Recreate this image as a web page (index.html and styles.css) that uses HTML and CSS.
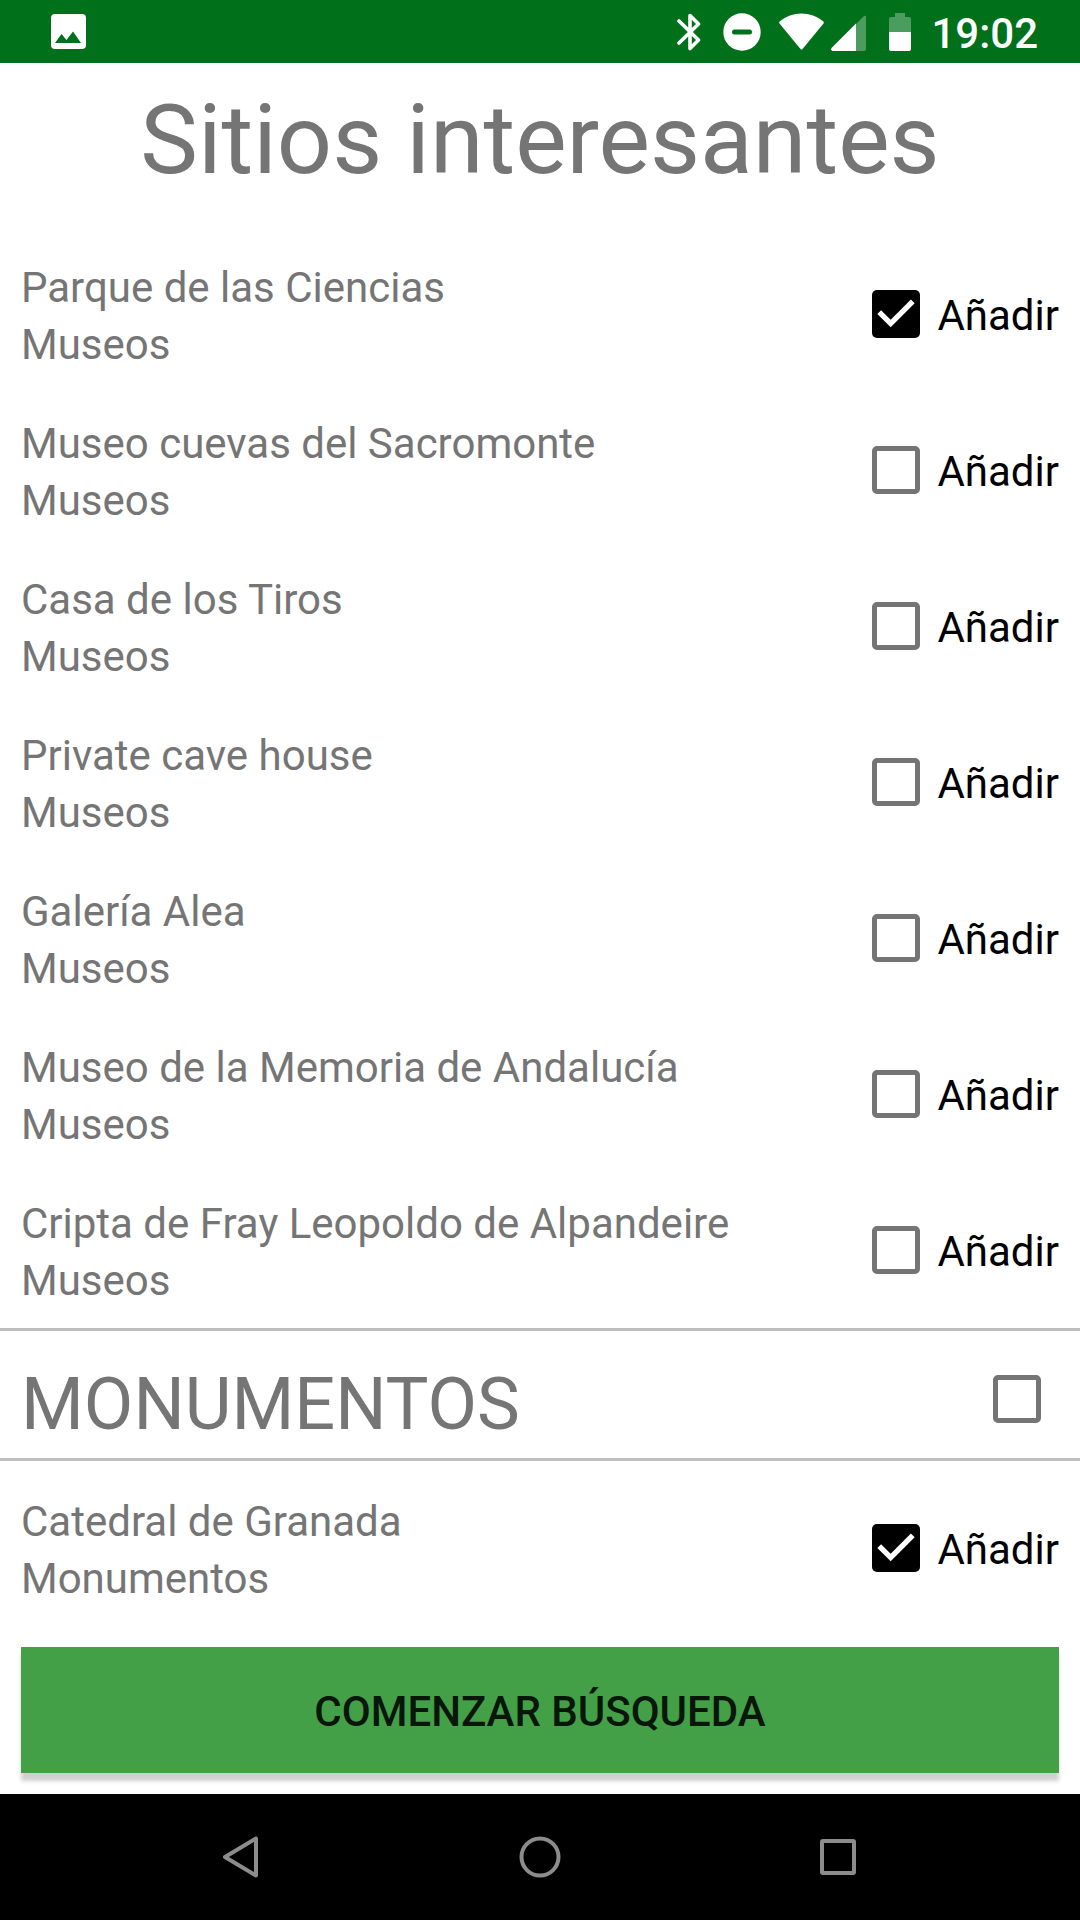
FILE: index.html
```html
<!DOCTYPE html>
<html lang="es">
<head>
<meta charset="utf-8">
<meta name="viewport" content="width=device-width, initial-scale=1">
<title>Sitios interesantes</title>
<link rel="stylesheet" href="styles.css">
</head>
<body>
<div class="screen">
  <header class="status-bar">
    <svg width="35" height="35" viewBox="0 0 35 35" aria-hidden="true"><path fill="#fff" fill-rule="evenodd" d="M4 0H31Q35 0 35 4V31Q35 35 31 35H4Q0 35 0 31V4Q0 0 4 0ZM4 29H30L22 17.500L15.500 26L10.500 20Z"/></svg>
    <div class="status-icons">
      <svg width="28" height="38" viewBox="0 0 28 38" fill="none" stroke="#fff" stroke-width="3.600" stroke-linecap="round" stroke-linejoin="round" aria-hidden="true"><path d="M2 8L21.500 27L13 35.500V2.500L21.500 11L2 30"/></svg>
      <svg width="38" height="38" viewBox="0 0 38 38" aria-hidden="true"><circle cx="19" cy="19" r="18.700" fill="#fff"/><path d="M11.500 19H26.500" stroke="#00711a" stroke-width="5" stroke-linecap="round"/></svg>
      <div class="network">
        <svg width="45" height="38" viewBox="0 0 45 38" aria-hidden="true"><path fill="#fff" d="M0.600 8.500C13-2.200 32-2.200 44.400 8.500Q45.200 9.500 44.500 10.400L23.500 36Q22.500 37.200 21.500 36L0.500 10.400Q-0.200 9.500 0.600 8.500Z"/></svg>
        <svg width="35" height="38" viewBox="0 0 35 38" aria-hidden="true"><path fill="#fff" fill-opacity=".3" d="M25 11L33 3Q35 2 35 4V36Q35 38 33 38H25Z"/><path fill="#fff" d="M25 10.500V38H1.500Q-0.500 37 0.500 35Z"/></svg>
      </div>
      <svg width="29" height="38" viewBox="0 0 29 38" aria-hidden="true"><path fill="#fff" fill-opacity=".3" d="M5 19V6Q5 4 7 4H11V0H21V4H25Q27 4 27 6V19Z"/><path fill="#fff" d="M5 19H27V36Q27 38 25 38H7Q5 38 5 36Z"/></svg>
      <time class="clock">19:02</time>
    </div>
  </header>

  <main class="content">
    <h1 class="title">Sitios interesantes</h1>

    <ul class="places">
      <li class="place">
        <div class="place-text"><span>Parque de las Ciencias</span><span>Museos</span></div>
        <label class="add"><input class="check" type="checkbox" checked><span class="add-text">Añadir</span></label>
      </li>
      <li class="place">
        <div class="place-text"><span>Museo cuevas del Sacromonte</span><span>Museos</span></div>
        <label class="add"><input class="check" type="checkbox"><span class="add-text">Añadir</span></label>
      </li>
      <li class="place">
        <div class="place-text"><span>Casa de los Tiros</span><span>Museos</span></div>
        <label class="add"><input class="check" type="checkbox"><span class="add-text">Añadir</span></label>
      </li>
      <li class="place">
        <div class="place-text"><span>Private cave house</span><span>Museos</span></div>
        <label class="add"><input class="check" type="checkbox"><span class="add-text">Añadir</span></label>
      </li>
      <li class="place">
        <div class="place-text"><span>Galería Alea</span><span>Museos</span></div>
        <label class="add"><input class="check" type="checkbox"><span class="add-text">Añadir</span></label>
      </li>
      <li class="place">
        <div class="place-text"><span>Museo de la Memoria de Andalucía</span><span>Museos</span></div>
        <label class="add"><input class="check" type="checkbox"><span class="add-text">Añadir</span></label>
      </li>
      <li class="place">
        <div class="place-text"><span>Cripta de Fray Leopoldo de Alpandeire</span><span>Museos</span></div>
        <label class="add"><input class="check" type="checkbox"><span class="add-text">Añadir</span></label>
      </li>
    </ul>

    <section class="category">
      <h2 class="category-name"><label for="all-monuments">MONUMENTOS</label></h2>
      <input class="check" type="checkbox" id="all-monuments">
    </section>

    <ul class="places places-after-category">
      <li class="place">
        <div class="place-text"><span>Catedral de Granada</span><span>Monumentos</span></div>
        <label class="add"><input class="check" type="checkbox" checked><span class="add-text">Añadir</span></label>
      </li>
    </ul>
  </main>

  <div class="actions">
    <button class="search" type="button">COMENZAR BÚSQUEDA</button>
  </div>

  <nav class="nav-bar">
    <button class="nav-button" type="button" aria-label="Atrás"><svg width="42" height="42" viewBox="0 0 42 42"><path d="M35 2.500V39.500L4 21Z"/></svg></button>
    <button class="nav-button" type="button" aria-label="Inicio"><svg width="42" height="42" viewBox="0 0 42 42"><circle cx="21" cy="21" r="18.500"/></svg></button>
    <button class="nav-button" type="button" aria-label="Recientes"><svg width="42" height="42" viewBox="0 0 42 42"><rect x="5" y="5" width="32" height="32" rx="1"/></svg></button>
  </nav>
</div>
</body>
</html>
```

FILE: styles.css
```css
* {
  box-sizing: border-box;
}

body {
  margin: 0;
  background: #fff;
  color: #757575;
  font-family: Roboto, "Noto Sans", sans-serif;
  font-size: 42px;
  line-height: 57px;
}

svg {
  display: block;
}

.screen {
  display: flex;
  flex-direction: column;
  min-height: 100vh;
}

.status-bar {
  display: flex;
  align-items: center;
  justify-content: space-between;
  height: 63px;
  padding: 0 42px 0 51px;
  background: #00711a;
  color: #fff;
}

.status-icons {
  display: flex;
  align-items: center;
  gap: 18px;
}

.network {
  display: flex;
  gap: 7px;
}

.clock {
  padding-top: 3px;
  font-weight: 500;
}

.content {
  flex: 1;
}

.title {
  margin: 0;
  padding: 21px 21px 39px;
  font-size: 97px;
  font-weight: 400;
  line-height: 113px;
  text-align: center;
}

.places {
  margin: 0;
  padding: 0;
  list-style: none;
}

.places-after-category {
  padding-top: 9px;
}

.place {
  display: flex;
  align-items: center;
  justify-content: space-between;
  padding: 21px;
}

.place-text {
  display: flex;
  flex-direction: column;
  padding-top: 2px;
  margin-bottom: -2px;
}

.add {
  display: flex;
  align-items: center;
  gap: 17px;
  color: #000;
}

.add-text {
  padding-top: 2px;
}

.check {
  appearance: none;
  flex: none;
  width: 48px;
  height: 48px;
  margin: 0;
  border: 5px solid #757575;
  border-radius: 5px;
  background: #fff;
}

.check:checked {
  border: 0;
  background: #000 url("data:image/svg+xml,%3Csvg xmlns='http://www.w3.org/2000/svg' viewBox='3 3 18 18'%3E%3Cpath fill='%23fff' d='M10 17l-5-5 1.410-1.410L10 14.170l7.590-7.590L19 8z'/%3E%3C/svg%3E") center / 48px no-repeat;
}

.category {
  display: flex;
  align-items: center;
  justify-content: space-between;
  min-height: 133px;
  padding: 9px 39px 0 21px;
  border-top: 3px solid #bebebe;
  border-bottom: 3px solid #bebebe;
}

.category-name {
  margin: 0;
  padding-top: 12px;
  font-size: 72px;
  font-weight: 400;
  line-height: 84px;
}

.actions {
  padding: 21px;
}

.search {
  display: block;
  width: 100%;
  height: 126px;
  padding: 2px 0 0;
  border: 0;
  background: #43a047;
  box-shadow: 0 8px 4px rgba(0, 0, 0, 0.19);
  color: #08170a;
  font: 500 42px/57px Roboto, "Noto Sans", sans-serif;
}

.nav-bar {
  display: flex;
  align-items: center;
  justify-content: center;
  gap: 256px;
  height: 126px;
  background: #000;
}

.nav-button {
  padding: 0;
  border: 0;
  background: none;
}

.nav-button svg {
  fill: none;
  stroke: #8c8c8c;
  stroke-width: 4;
  stroke-linejoin: round;
}
```
